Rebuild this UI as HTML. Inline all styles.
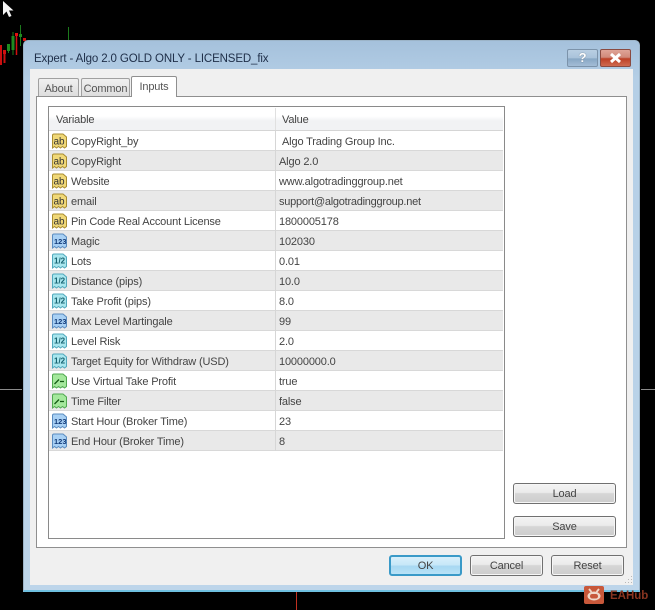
<!DOCTYPE html>
<html><head><meta charset="utf-8">
<style>
*{box-sizing:border-box;margin:0;padding:0}
html,body{width:655px;height:610px;overflow:hidden;background:#000}
body{position:relative;font-family:"Liberation Sans",sans-serif;font-size:11px;letter-spacing:-.15px;color:#444}
.a{position:absolute}
.t{position:absolute;white-space:nowrap;line-height:14px;color:#444}
.row{position:absolute;left:49px;width:454px;height:20px;border-bottom:1px solid #d8d8d8}
.row.g{background:#e9e9e9}
.row i{position:absolute;left:226px;top:0;width:1px;height:20px;background:#d6d6d6}
.ic{position:absolute;left:2px;top:2px}
.n{position:absolute;left:22px;top:4px;white-space:nowrap;line-height:14px}
.v{position:absolute;left:230px;top:4px;white-space:nowrap;line-height:14px}
.btn{position:absolute;border:1px solid #707070;border-radius:3px;background:linear-gradient(#f3f3f3 0,#ebebeb 45%,#d6d6d6 50%,#cdcdcd 100%);text-align:center;box-shadow:inset 0 0 0 1px #f6f6f6;color:#444}
.tab{position:absolute;border:1px solid #a0a0a0;border-bottom:none;border-radius:2px 2px 0 0;text-align:center;background:linear-gradient(#f0f0f0,#dcdcdc);color:#555}
svg text{letter-spacing:0}
</style></head><body>
<svg class="a" style="left:0;top:0" width="70" height="70">
<path d="M3 1V15L6.500 11.500L9 17L11.500 16L9 10.500H13.500Z" fill="#f4f4f4"/>
<path d="M13 32V55M20.500 25V46M68.500 27V40M8.500 44V53" stroke="#1c7a1c" stroke-width="1"/>
<rect x="11.500" y="36" width="3" height="14" fill="#1f8a1f"/>
<rect x="19" y="34" width="3" height="3" fill="#1f8a1f"/>
<rect x="7" y="44" width="3" height="7" fill="#1f8a1f"/>
<path d="M16.500 33V55" stroke="#d01010" stroke-width="1.500"/><rect x="15" y="33" width="3" height="3" fill="#e01010"/>
<path d="M1 45V65M4.500 50V63" stroke="#c81010" stroke-width="2"/>
<rect x="3" y="50" width="3" height="4" fill="#d01010"/>
<rect x="23" y="38" width="3" height="3" fill="#d01010"/>
</svg>
<div class="a" style="left:0;top:389px;width:22px;height:1px;background:#8a8a8a"></div>
<div class="a" style="left:641px;top:389px;width:14px;height:1px;background:#8a8a8a"></div>
<div class="a" style="left:296px;top:592px;width:1px;height:18px;background:#c03020"></div>

<!-- window frame -->
<div class="a" style="left:23px;top:40px;width:617px;height:552px;border-radius:5px 5px 0 0;border:1px solid #9cb4c8;border-bottom:2px solid #6fc0e0;background:linear-gradient(#a5c1dc 0,#b5cfe6 40px,#bdd5ea 100%)"></div>
<div class="a" style="left:30px;top:69px;width:603px;height:516px;background:#f0f0f0"></div>
<div class="t" style="left:34px;top:52px;color:#20304a;font-size:11.5px;letter-spacing:-.13px">Expert - Algo 2.0 GOLD ONLY - LICENSED_fix</div>

<!-- caption buttons -->
<div class="a" style="left:567px;top:49px;width:31px;height:18px;border:1px solid #7c93aa;border-radius:2px;background:linear-gradient(#b9cfe3 0,#a9c2da 50%,#88a7c4 55%,#a3bdd6 100%);color:#fff;font:bold 13px/16px 'Liberation Sans',sans-serif;text-align:center;text-shadow:0 0 1px #456">?</div>
<div class="a" style="left:600px;top:49px;width:31px;height:18px;border:1px solid #8a4a40;border-radius:2px;background:linear-gradient(#dfa497 0,#d0897a 45%,#bd4026 55%,#cf6a50 100%)">
<svg width="29" height="16" style="display:block"><path d="M10 4L19 12M19 4L10 12" stroke="#fff" stroke-width="3"/></svg></div>

<!-- tabs -->
<div class="tab" style="left:38px;top:78px;width:41px;height:19px;line-height:20px">About</div>
<div class="tab" style="left:81px;top:78px;width:49px;height:19px;line-height:20px">Common</div>
<div class="a" style="left:36px;top:96px;width:591px;height:452px;background:#fff;border:1px solid #8f8f8f"></div>
<div class="tab" style="left:131px;top:76px;width:46px;height:21px;line-height:20px;background:#fff;z-index:2;border-color:#8f8f8f">Inputs</div>

<!-- list -->
<div class="a" style="left:48px;top:106px;width:457px;height:433px;background:#fff;border:1px solid #8a8a8a"></div>
<div class="a" style="left:49px;top:107px;width:454px;height:24px;background:linear-gradient(#fff 0,#fff 40%,#f1f2f4 60%,#f1f2f4 100%);border-bottom:1px solid #d5d5d5"></div>
<div class="a" style="left:275px;top:108px;width:1px;height:22px;background:#e0e0e0"></div>
<div class="t" style="left:56px;top:113px">Variable</div>
<div class="t" style="left:282px;top:113px">Value</div>

<svg width="0" height="0" style="position:absolute"><defs>
<path id="sh" d="M1.500 2.500Q1.500 1 3 1H12L15.500 4V13.500L13.500 15L11.500 13.500L9.500 15L7.500 13.500L5.500 15L3.500 13.500L1.500 15Z"/>
</defs></svg>

<div class="row" style="top:131px"><svg class="ic" width="17" height="16"><use href="#sh" fill="#f0d878" stroke="#a88c30"/><text x="2.500" y="11.500" font-family="Liberation Sans" font-size="10" fill="#333">ab</text></svg><span class="n">CopyRight_by</span><i></i><span class="v" style="left:233px">Algo Trading Group Inc.</span></div>
<div class="row g" style="top:151px"><svg class="ic" width="17" height="16"><use href="#sh" fill="#f0d878" stroke="#a88c30"/><text x="2.500" y="11.500" font-family="Liberation Sans" font-size="10" fill="#333">ab</text></svg><span class="n">CopyRight</span><i></i><span class="v">Algo 2.0</span></div>
<div class="row" style="top:171px"><svg class="ic" width="17" height="16"><use href="#sh" fill="#f0d878" stroke="#a88c30"/><text x="2.500" y="11.500" font-family="Liberation Sans" font-size="10" fill="#333">ab</text></svg><span class="n">Website</span><i></i><span class="v">www.algotradinggroup.net</span></div>
<div class="row g" style="top:191px"><svg class="ic" width="17" height="16"><use href="#sh" fill="#f0d878" stroke="#a88c30"/><text x="2.500" y="11.500" font-family="Liberation Sans" font-size="10" fill="#333">ab</text></svg><span class="n">email</span><i></i><span class="v" style="letter-spacing:-.25px">support@algotradinggroup.net</span></div>
<div class="row" style="top:211px"><svg class="ic" width="17" height="16"><use href="#sh" fill="#f0d878" stroke="#a88c30"/><text x="2.500" y="11.500" font-family="Liberation Sans" font-size="10" fill="#333">ab</text></svg><span class="n">Pin Code Real Account License</span><i></i><span class="v">1800005178</span></div>
<div class="row g" style="top:231px"><svg class="ic" width="17" height="16"><use href="#sh" fill="#a8d0f4" stroke="#5a8cc0"/><text x="3" y="11" font-family="Liberation Sans" font-size="7.500" font-weight="bold" fill="#123a78">123</text></svg><span class="n">Magic</span><i></i><span class="v">102030</span></div>
<div class="row" style="top:251px"><svg class="ic" width="17" height="16"><use href="#sh" fill="#a8e6ee" stroke="#50a8bc"/><text x="3" y="10.500" font-family="Liberation Sans" font-size="8" font-weight="bold" fill="#15606e">1/2</text></svg><span class="n">Lots</span><i></i><span class="v">0.01</span></div>
<div class="row g" style="top:271px"><svg class="ic" width="17" height="16"><use href="#sh" fill="#a8e6ee" stroke="#50a8bc"/><text x="3" y="10.500" font-family="Liberation Sans" font-size="8" font-weight="bold" fill="#15606e">1/2</text></svg><span class="n">Distance (pips)</span><i></i><span class="v">10.0</span></div>
<div class="row" style="top:291px"><svg class="ic" width="17" height="16"><use href="#sh" fill="#a8e6ee" stroke="#50a8bc"/><text x="3" y="10.500" font-family="Liberation Sans" font-size="8" font-weight="bold" fill="#15606e">1/2</text></svg><span class="n">Take Profit (pips)</span><i></i><span class="v">8.0</span></div>
<div class="row g" style="top:311px"><svg class="ic" width="17" height="16"><use href="#sh" fill="#a8d0f4" stroke="#5a8cc0"/><text x="3" y="11" font-family="Liberation Sans" font-size="7.500" font-weight="bold" fill="#123a78">123</text></svg><span class="n">Max Level Martingale</span><i></i><span class="v">99</span></div>
<div class="row" style="top:331px"><svg class="ic" width="17" height="16"><use href="#sh" fill="#a8e6ee" stroke="#50a8bc"/><text x="3" y="10.500" font-family="Liberation Sans" font-size="8" font-weight="bold" fill="#15606e">1/2</text></svg><span class="n">Level Risk</span><i></i><span class="v">2.0</span></div>
<div class="row g" style="top:351px"><svg class="ic" width="17" height="16"><use href="#sh" fill="#a8e6ee" stroke="#50a8bc"/><text x="3" y="10.500" font-family="Liberation Sans" font-size="8" font-weight="bold" fill="#15606e">1/2</text></svg><span class="n">Target Equity for Withdraw (USD)</span><i></i><span class="v">10000000.0</span></div>
<div class="row" style="top:371px"><svg class="ic" width="17" height="16"><use href="#sh" fill="#a4e89c" stroke="#50a850"/><path d="M3.500 11L8 6.500M9 8.500H13" fill="none" stroke="#145a14" stroke-width="1.300"/></svg><span class="n">Use Virtual Take Profit</span><i></i><span class="v">true</span></div>
<div class="row g" style="top:391px"><svg class="ic" width="17" height="16"><use href="#sh" fill="#a4e89c" stroke="#50a850"/><path d="M3.500 11L8 6.500M9 8.500H13" fill="none" stroke="#145a14" stroke-width="1.300"/></svg><span class="n">Time Filter</span><i></i><span class="v">false</span></div>
<div class="row" style="top:411px"><svg class="ic" width="17" height="16"><use href="#sh" fill="#a8d0f4" stroke="#5a8cc0"/><text x="3" y="11" font-family="Liberation Sans" font-size="7.500" font-weight="bold" fill="#123a78">123</text></svg><span class="n">Start Hour (Broker Time)</span><i></i><span class="v">23</span></div>
<div class="row g" style="top:431px"><svg class="ic" width="17" height="16"><use href="#sh" fill="#a8d0f4" stroke="#5a8cc0"/><text x="3" y="11" font-family="Liberation Sans" font-size="7.500" font-weight="bold" fill="#123a78">123</text></svg><span class="n">End Hour (Broker Time)</span><i></i><span class="v">8</span></div>

<!-- buttons -->
<div class="btn" style="left:513px;top:483px;width:103px;height:21px;line-height:21px">Load</div>
<div class="btn" style="left:513px;top:516px;width:103px;height:21px;line-height:21px">Save</div>
<div class="btn" style="left:389px;top:555px;width:73px;height:21px;line-height:19px;border:2px solid #3a9ac8;background:linear-gradient(#d8f0fb 0,#c8e8f8 45%,#a8d8f2 55%,#b8e2f6 100%);box-shadow:none">OK</div>
<div class="btn" style="left:470px;top:555px;width:73px;height:21px;line-height:20px">Cancel</div>
<div class="btn" style="left:551px;top:555px;width:73px;height:21px;line-height:20px">Reset</div>

<!-- size grip -->
<svg class="a" style="left:624px;top:575px" width="9" height="9"><path d="M7 1h1v1h-1zM4 4h1v1h-1zM7 4h1v1h-1zM1 7h1v1h-1zM4 7h1v1h-1zM7 7h1v1h-1z" fill="#b8b8b8"/></svg>

<!-- watermark -->
<svg class="a" style="left:584px;top:586px" width="20" height="18"><rect x="0" y="0" width="20" height="18" rx="2" fill="#c8583a"/><path d="M5 3L7.500 6M15 3L12.500 6" stroke="#f0d8c8" stroke-width="1.800"/><ellipse cx="10" cy="10" rx="6.500" ry="4.500" fill="#f0d8c8"/><rect x="6" y="8" width="8" height="4.500" rx="2.200" fill="#c8583a"/></svg>
<div class="t" style="left:610px;top:589px;color:#8a3520;font-weight:bold;font-size:11.500px;letter-spacing:0">EAHub</div>
</body></html>
